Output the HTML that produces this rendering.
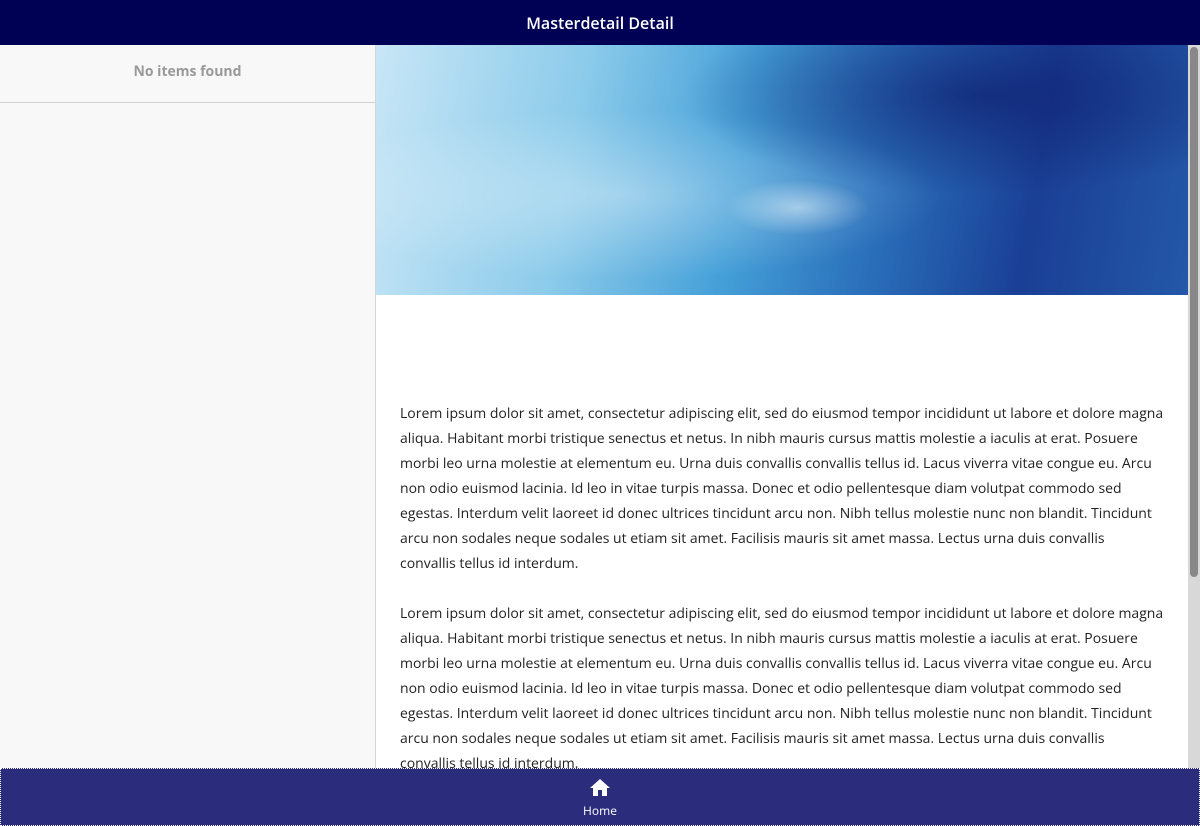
<!DOCTYPE html>
<html><head><meta charset="utf-8"><style>
*{margin:0;padding:0;box-sizing:border-box}
body{width:1200px;height:826px;overflow:hidden;font-family:"Open Sans","Liberation Sans",sans-serif;background:#fff;position:relative}
.hdr{position:absolute;top:0;left:0;width:1200px;height:45px;background:#000055;color:#fff;font-size:16px;font-weight:600;text-align:center;line-height:47px}
.left{position:absolute;top:45px;left:0;width:376px;height:723px;background:#f8f8f8;border-right:1px solid #d6d6d6}
.left .ni{height:58px;border-bottom:1px solid #d0d0d0;text-align:center;line-height:54px;color:#999;font-size:14px;font-weight:bold}
.img{position:absolute;top:45px;left:376px;width:812px;height:250px;background:
radial-gradient(ellipse at 75% 20%,rgba(15,30,110,.7),transparent 35%),
radial-gradient(ellipse at 30% 60%,rgba(255,255,255,.35),transparent 40%),
radial-gradient(ellipse at 52% 65%,rgba(240,250,255,.5),transparent 12%),
linear-gradient(100deg,#c8e6f6 0%,#8ccbea 25%,#45a0d8 45%,#2a6fba 62%,#1a3f95 80%,#2458a8 100%)}
.sb{position:absolute;top:45px;left:1188px;width:12px;height:723px;background:#d8d8d8}
.sb div{position:absolute;left:2px;top:2px;width:8px;height:530px;background:#888;border-radius:4px}
.txt{position:absolute;top:401px;left:400px;width:763.6px;font-size:14px;line-height:25px;color:#222}
.txt p{margin-bottom:25px}
.nav{position:absolute;top:768px;left:0;width:1200px;height:58px;background:#2b2d7c;border:1px dotted #fff;color:#fff;text-align:center;font-size:12px}
</style></head><body>
<div class="hdr">Masterdetail Detail</div>
<div class="left"><div class="ni">No items found</div></div>
<div class="img"></div>
<div class="txt">
<p>Lorem ipsum dolor sit amet, consectetur adipiscing elit, sed do eiusmod tempor incididunt ut labore et dolore magna aliqua. Habitant morbi tristique senectus et netus. In nibh mauris cursus mattis molestie a iaculis at erat. Posuere morbi leo urna molestie at elementum eu. Urna duis convallis convallis tellus id. Lacus viverra vitae congue eu. Arcu non odio euismod lacinia. Id leo in vitae turpis massa. Donec et odio pellentesque diam volutpat commodo sed egestas. Interdum velit laoreet id donec ultrices tincidunt arcu non. Nibh tellus molestie nunc non blandit. Tincidunt arcu non sodales neque sodales ut etiam sit amet. Facilisis mauris sit amet massa. Lectus urna duis convallis convallis tellus id interdum.</p>
<p>Lorem ipsum dolor sit amet, consectetur adipiscing elit, sed do eiusmod tempor incididunt ut labore et dolore magna aliqua. Habitant morbi tristique senectus et netus. In nibh mauris cursus mattis molestie a iaculis at erat. Posuere morbi leo urna molestie at elementum eu. Urna duis convallis convallis tellus id. Lacus viverra vitae congue eu. Arcu non odio euismod lacinia. Id leo in vitae turpis massa. Donec et odio pellentesque diam volutpat commodo sed egestas. Interdum velit laoreet id donec ultrices tincidunt arcu non. Nibh tellus molestie nunc non blandit. Tincidunt arcu non sodales neque sodales ut etiam sit amet. Facilisis mauris sit amet massa. Lectus urna duis convallis convallis tellus id interdum.</p>
</div>
<div class="sb"><div></div></div>
<div class="nav">
<svg width="24" height="24" viewBox="0 0 24 24" style="margin-top:7px"><path d="M10 20v-6h4v6h5v-8h3L12 3 2 12h3v8z" fill="#fff"/></svg>
<div style="margin-top:-2px">Home</div>
</div>
</body></html>
